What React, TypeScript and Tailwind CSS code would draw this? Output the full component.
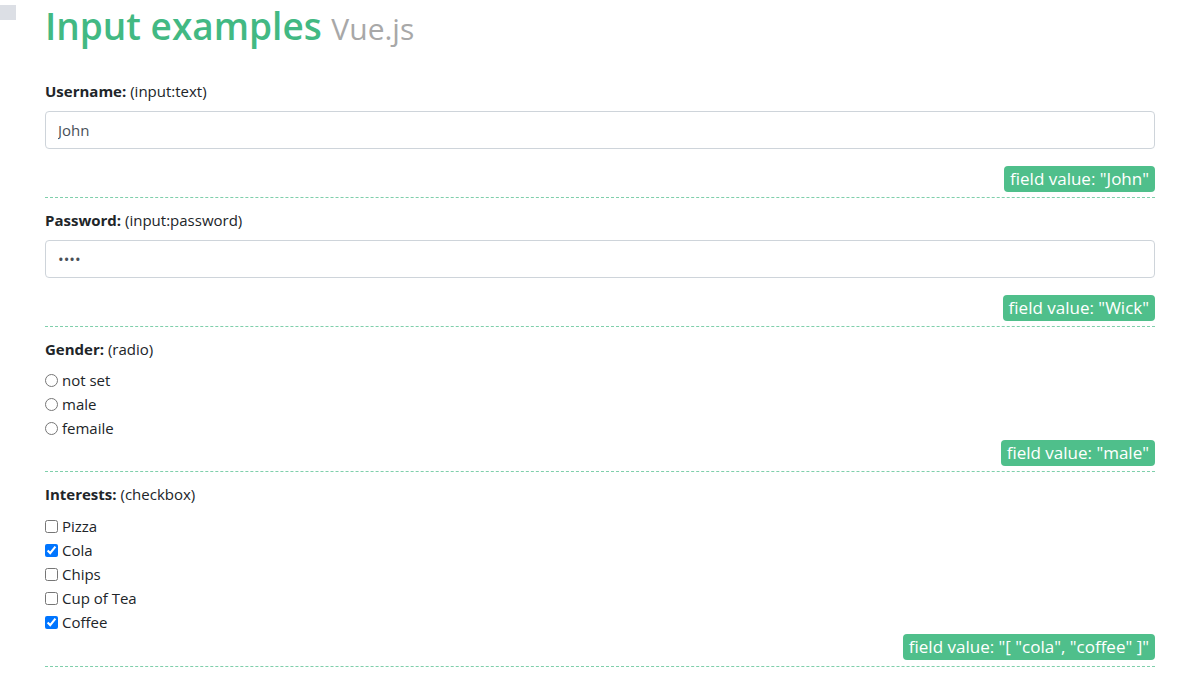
import { useState } from "react";

const font = { fontFamily: '"Open Sans", "Noto Sans", sans-serif' };

function Badge({ children }: { children: React.ReactNode }) {
  return (
    <div className="flex justify-end">
      <span className="rounded-[4px] bg-[#4fbf8b] px-[6px] text-[17px] leading-[26px] text-white">
        {children}
      </span>
    </div>
  );
}

function Label({ name, kind }: { name: string; kind: string }) {
  return (
    <div className="text-[15px] leading-[24px] text-[#212529]">
      <b className="font-bold">{name}</b> ({kind})
    </div>
  );
}

export default function App() {
  const [username, setUsername] = useState("John");
  const [password, setPassword] = useState("Wick");
  const [gender, setGender] = useState("male");
  const [interests, setInterests] = useState<string[]>(["cola", "coffee"]);

  const genders = [
    { value: "", label: "not set" },
    { value: "male", label: "male" },
    { value: "femaile", label: "femaile" },
  ];
  const foods = [
    { value: "pizza", label: "Pizza" },
    { value: "cola", label: "Cola" },
    { value: "chips", label: "Chips" },
    { value: "tea", label: "Cup of Tea" },
    { value: "coffee", label: "Coffee" },
  ];

  const toggle = (v: string) =>
    setInterests((cur) => (cur.includes(v) ? cur.filter((x) => x !== v) : [...cur, v]));

  const ordered = foods.map((f) => f.value).filter((v) => interests.includes(v));

  return (
    <div className="relative min-h-screen bg-white" style={font}>
      <div className="absolute left-0 top-[5px] h-[15px] w-[16px] bg-[#dcdfe5]" />
      <div className="mx-auto w-[1140px] px-[15px]">
        <h1 className="pt-[2px] text-[37px] font-semibold leading-[48px] text-[#42b983]">
          Input examples <small className="text-[30px] font-normal text-[#a8a8a8]">Vue.js</small>
        </h1>

        <div className="mt-[26px] border-b border-dashed border-[#7fcfab] pb-[5px]">
          <Label name="Username:" kind="input:text" />
          <input
            type="text"
            value={username}
            onChange={(e) => setUsername(e.target.value)}
            className="mt-[8px] block h-[38px] w-full rounded-[4px] border border-[#ced4da] px-[12px] text-[15px] text-[#495057] outline-none"
          />
          <div className="mt-[17px]">
            <Badge>field value: "{username}"</Badge>
          </div>
        </div>

        <div className="border-b border-dashed border-[#7fcfab] pb-[5px] pt-[10px]">
          <Label name="Password:" kind="input:password" />
          <input
            type="password"
            value={password}
            onChange={(e) => setPassword(e.target.value)}
            className="mt-[8px] block h-[38px] w-full rounded-[4px] border border-[#ced4da] px-[12px] text-[15px] text-[#495057] outline-none"
          />
          <div className="mt-[17px]">
            <Badge>field value: "{password}"</Badge>
          </div>
        </div>

        <div className="border-b border-dashed border-[#7fcfab] pb-[5px] pt-[10px]">
          <Label name="Gender:" kind="radio" />
          <div className="mt-[7px]">
            {genders.map((g) => (
              <label key={g.label} className="flex h-[24px] items-center gap-[4px] text-[15px] text-[#212529]">
                <input
                  type="radio"
                  name="gender"
                  value={g.value}
                  checked={false}
                  onChange={() => setGender(g.value)}
                  className="m-0 h-[13px] w-[13px]"
                />
                {g.label}
              </label>
            ))}
          </div>
          <Badge>field value: "{gender}"</Badge>
        </div>

        <div className="border-b border-dashed border-[#7fcfab] pb-[6px] pt-[10px]">
          <Label name="Interests:" kind="checkbox" />
          <div className="mt-[8px]">
            {foods.map((f) => (
              <label key={f.value} className="flex h-[24px] items-center gap-[4px] text-[15px] text-[#212529]">
                <input
                  type="checkbox"
                  checked={interests.includes(f.value)}
                  onChange={() => toggle(f.value)}
                  className="m-0 h-[13px] w-[13px]"
                />
                {f.label}
              </label>
            ))}
          </div>
          <Badge>field value: "[ {ordered.map((v) => `"${v}"`).join(", ")} ]"</Badge>
        </div>
      </div>
    </div>
  );
}
